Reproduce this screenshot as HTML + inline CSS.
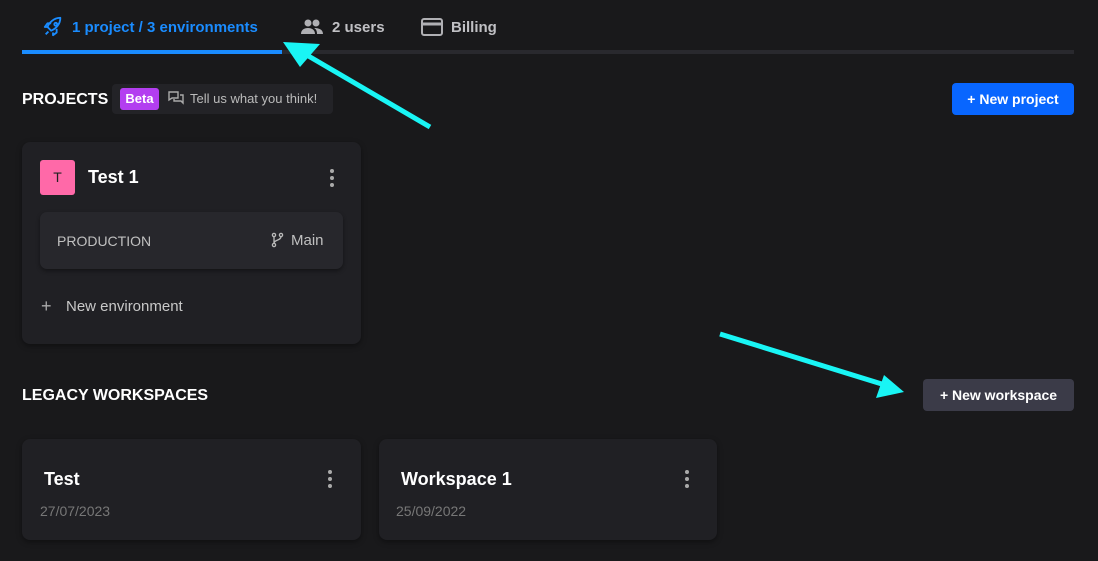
<!DOCTYPE html>
<html><head><meta charset="utf-8"><style>
*{box-sizing:border-box;margin:0;padding:0}
body{width:1098px;height:561px;background:#19191b;font-family:"Liberation Sans",sans-serif;color:#fff;position:relative;overflow:hidden}
.a{position:absolute}
.tab{font-size:15px;font-weight:bold;display:flex;align-items:center;gap:8px;top:17px;height:20px}
.card{background:#202024;border-radius:8px;box-shadow:0 2px 6px rgba(0,0,0,.4)}
.dots{width:4px}
.dots i{display:block;width:4px;height:4px;border-radius:2px;background:#aaa;margin-bottom:3px}
</style></head><body>
<div class="a tab" style="left:42px;color:#1a8cff">
<svg width="22" height="22" viewBox="0 0 24 24" fill="none" stroke="#1a8cff" stroke-width="2" stroke-linejoin="round"><path d="M9 15l-3-3c2-5 7-10 14-10 0 7-5 12-10 14z"/><circle cx="15" cy="9" r="1.6"/><path d="M6 12H3l3-4h4M12 18v3l4-3v-4M7 17l-3 3"/></svg>1 project / 3 environments</div>
<div class="a tab" style="left:300px;color:#c0c0c4">
<svg width="24" height="20" viewBox="0 0 24 20" fill="#b0b0b4"><circle cx="8" cy="6" r="3.5"/><circle cx="16" cy="6" r="3.5"/><path d="M1 17c0-4 3-6 7-6s7 2 7 6zM14 11c4 0 9 1 9 6h-6c0-3-1-5-3-6z"/></svg>2 users</div>
<div class="a tab" style="left:421px;color:#c0c0c4">
<svg width="22" height="18" viewBox="0 0 22 18" fill="none" stroke="#b0b0b4" stroke-width="2"><rect x="1" y="1" width="20" height="16" rx="2"/><path d="M1 6h20" stroke-width="3"/></svg>Billing</div>
<div class="a" style="left:22px;top:50px;width:1052px;height:4px;background:#29292e"></div>
<div class="a" style="left:22px;top:50px;width:260px;height:4px;background:#1a8cff"></div>

<div class="a" style="left:22px;top:91px;font-size:16px;font-weight:bold">PROJECTS</div>
<div class="a" style="left:112px;top:84px;width:221px;height:30px;background:#232327;border-radius:4px"></div>
<div class="a" style="left:120px;top:88px;width:39px;height:22px;background:#b33ef0;border-radius:3px;font-size:13px;font-weight:bold;text-align:center;line-height:22px">Beta</div>
<svg class="a" style="left:168px;top:90px" width="16" height="16" viewBox="0 0 16 16" fill="none" stroke="#aaa" stroke-width="1.4"><path d="M1 2h9v6H4l-3 2zM12 5h3v8l-2-2H6V9"/></svg>
<div class="a" style="left:190px;top:91px;font-size:13px;color:#bbb">Tell us what you think!</div>
<div class="a" style="left:952px;top:83px;width:122px;height:32px;background:#0866ff;border-radius:4px;font-size:14px;font-weight:bold;text-align:center;line-height:32px">+ New project</div>

<div class="a card" style="left:22px;top:142px;width:339px;height:202px"></div>
<div class="a" style="left:40px;top:160px;width:35px;height:35px;background:#ff69a8;border-radius:3px;color:#222;font-size:14px;text-align:center;line-height:35px">T</div>
<div class="a" style="left:88px;top:167px;font-size:18px;font-weight:bold">Test 1</div>
<div class="a dots" style="left:330px;top:169px"><i></i><i></i><i></i></div>
<div class="a" style="left:40px;top:212px;width:303px;height:57px;background:#27272c;border-radius:7px;box-shadow:0 2px 4px rgba(0,0,0,.4)"></div>
<div class="a" style="left:57px;top:233px;font-size:14px;color:#c0c0c0">PRODUCTION</div>
<svg class="a" style="left:271px;top:232px" width="14" height="16" viewBox="0 0 14 16" fill="none" stroke="#bbb" stroke-width="1.3"><circle cx="3" cy="3" r="1.6"/><circle cx="10" cy="3" r="1.6"/><circle cx="3" cy="13" r="1.6"/><path d="M3 4.6v6.8M10 4.6c0 4-7 3-7 6.8"/></svg>
<div class="a" style="left:291px;top:232px;font-size:15px;color:#c0c0c0">Main</div>
<div class="a" style="left:41px;top:296px;font-size:18px;color:#aaa">+</div>
<div class="a" style="left:66px;top:298px;font-size:15px;color:#c8c8c8">New environment</div>

<div class="a" style="left:22px;top:387px;font-size:16px;font-weight:bold">LEGACY WORKSPACES</div>
<div class="a" style="left:923px;top:379px;width:151px;height:32px;background:#3b3b48;border-radius:4px;font-size:14px;font-weight:bold;text-align:center;line-height:32px">+ New workspace</div>

<div class="a card" style="left:22px;top:439px;width:339px;height:101px"></div>
<div class="a" style="left:44px;top:469px;font-size:18px;font-weight:bold">Test</div>
<div class="a" style="left:40px;top:503px;font-size:14px;color:#777">27/07/2023</div>
<div class="a dots" style="left:328px;top:470px"><i></i><i></i><i></i></div>
<div class="a card" style="left:379px;top:439px;width:338px;height:101px"></div>
<div class="a" style="left:401px;top:469px;font-size:18px;font-weight:bold">Workspace 1</div>
<div class="a" style="left:396px;top:503px;font-size:14px;color:#777">25/09/2022</div>
<div class="a dots" style="left:685px;top:470px"><i></i><i></i><i></i></div>

<svg class="a" style="left:0;top:0" width="1098" height="561">
<path d="M430 127L305 54" stroke="#19f5f5" stroke-width="5"/>
<polygon points="283,42 320,44 300,67" fill="#19f5f5"/>
<path d="M720 334L885 385" stroke="#19f5f5" stroke-width="5"/>
<polygon points="904,392 876,398 884,375" fill="#19f5f5"/>
</svg>
</body></html>
